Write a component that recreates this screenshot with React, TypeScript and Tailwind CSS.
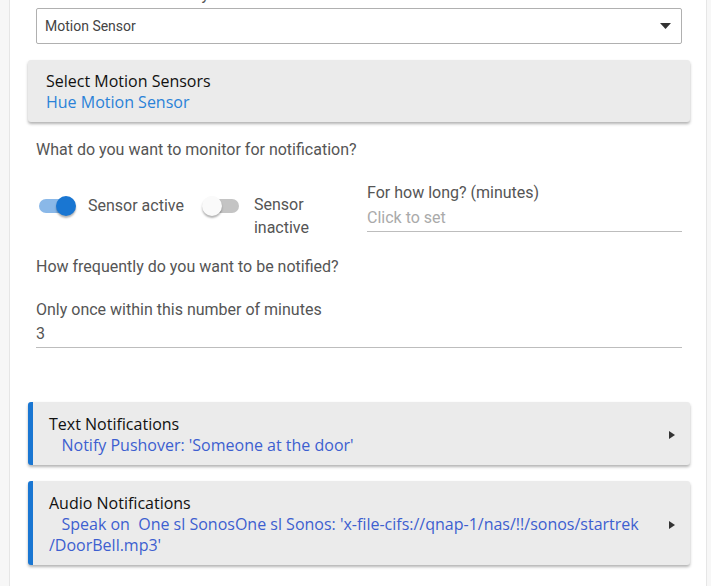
import React from 'react';

const roboto = { fontFamily: 'Roboto, "Liberation Sans", sans-serif' };

const Switch: React.FC<{ on: boolean }> = ({ on }) => (
  <div className="relative w-[40px] h-[20px] shrink-0">
    <div
      className={`absolute top-[3px] left-[3px] w-[34px] h-[14px] rounded-full ${
        on ? 'bg-[#8ab8e8]' : 'bg-[#c4c4c4]'
      }`}
    />
    <div
      className={`absolute top-0 w-[20px] h-[20px] rounded-full shadow-[0_2px_2px_rgba(0,0,0,0.3)] ${
        on ? 'left-[20px] bg-[#1976d2]' : 'left-0 bg-[#fafafa]'
      }`}
    />
  </div>
);

const Caret = () => (
  <svg width="8" height="10" viewBox="0 0 8 10" className="shrink-0">
    <path d="M1 1 L7 5 L1 9 Z" fill="#333" />
  </svg>
);

const NotifyCard: React.FC<{ title: string; children: React.ReactNode }> = ({ title, children }) => (
  <div className="flex items-center bg-[#ebebeb] border-l-[5px] border-[#1976d2] rounded-[3px] shadow-[0_2px_3px_rgba(0,0,0,0.3)] pt-[12px] pb-[9px] pl-[16px] pr-[14px]">
    <div className="flex-1 text-[16px] leading-[21px]">
      <div className="text-[#111]">{title}</div>
      <div className="text-[#3d5fd0] whitespace-pre-wrap">{children}</div>
    </div>
    <Caret />
  </div>
);

export default function App() {
  return (
    <div className="w-[711px] h-[586px] overflow-hidden bg-[#f7f7f7]" style={{ fontFamily: '"Open Sans", sans-serif' }}>
      <div className="ml-[9px] w-[698px] h-full flex flex-col bg-white border-l border-r border-[#e6e6e6] pl-[18px] pr-[16px]">
        <div className="mt-[-17px]">
          {/* device type */}
          <div className="px-2">
            <div className="text-[16px] leading-[24px] text-[#555]" style={roboto}>
              What kind of device do you want to be notified about
            </div>
            <div className="mt-[1px] flex items-center h-[36px] border border-[#b0b0b0] rounded-[2px] pl-[8px] pr-[10px]">
              <span className="flex-1 text-[14px] text-[#444]" style={roboto}>Motion Sensor</span>
              <svg width="11" height="6" viewBox="0 0 11 6">
                <path d="M0 0 L11 0 L5.5 6 Z" fill="#333" />
              </svg>
            </div>
          </div>

          {/* select motion sensors */}
          <div className="mt-[16px] bg-[#ebebeb] rounded-[3px] shadow-[0_2px_3px_rgba(0,0,0,0.3)] pt-[11px] pb-[9px] px-[18px] text-[16px] leading-[21px]">
            <div className="text-[#111]">Select Motion Sensors</div>
            <div className="text-[#2a82d8]">Hue Motion Sensor</div>
          </div>

          <div className="px-2 text-[#555]" style={roboto}>
            <div className="mt-[16px] text-[16px] leading-[24px]">What do you want to monitor for notification?</div>

            <div className="mt-[19px] grid grid-cols-2 gap-x-[16px]">
              <div className="flex items-start pt-[15px]">
                <Switch on />
                <span className="ml-[12px] mt-[-2px] text-[16px] leading-[23px]">Sensor active</span>
                <div className="ml-[18px]">
                  <Switch on={false} />
                </div>
                <span className="ml-[12px] mt-[-3px] w-[60px] text-[16px] leading-[23px]">
                  Sensor
                  <br />
                  inactive
                </span>
              </div>
              <div>
                <div className="text-[16px] leading-[24px]">For how long? (minutes)</div>
                <div className="text-[16px] leading-[25px] text-[#aaa] border-b border-[#bdbdbd] pb-[1px]">Click to set</div>
              </div>
            </div>

            <div className="mt-[16px] text-[16px] leading-[24px]">How frequently do you want to be notified?</div>

            <div className="mt-[19px] text-[16px] leading-[24px]">Only once within this number of minutes</div>
            <div className="text-[16px] leading-[24px] border-b border-[#bdbdbd] pb-[1px]">3</div>
          </div>

          <div className="mt-[54px] flex flex-col gap-[16px]">
            <NotifyCard title="Text Notifications">{"   Notify Pushover: 'Someone at the door'"}</NotifyCard>
            <NotifyCard title="Audio Notifications">
              {"   Speak on  One sl SonosOne sl Sonos: 'x-file-cifs://qnap-1/nas/!!/sonos/startrek"}
              <br />
              {"/DoorBell.mp3'"}
            </NotifyCard>
          </div>
        </div>
      </div>
    </div>
  );
}
